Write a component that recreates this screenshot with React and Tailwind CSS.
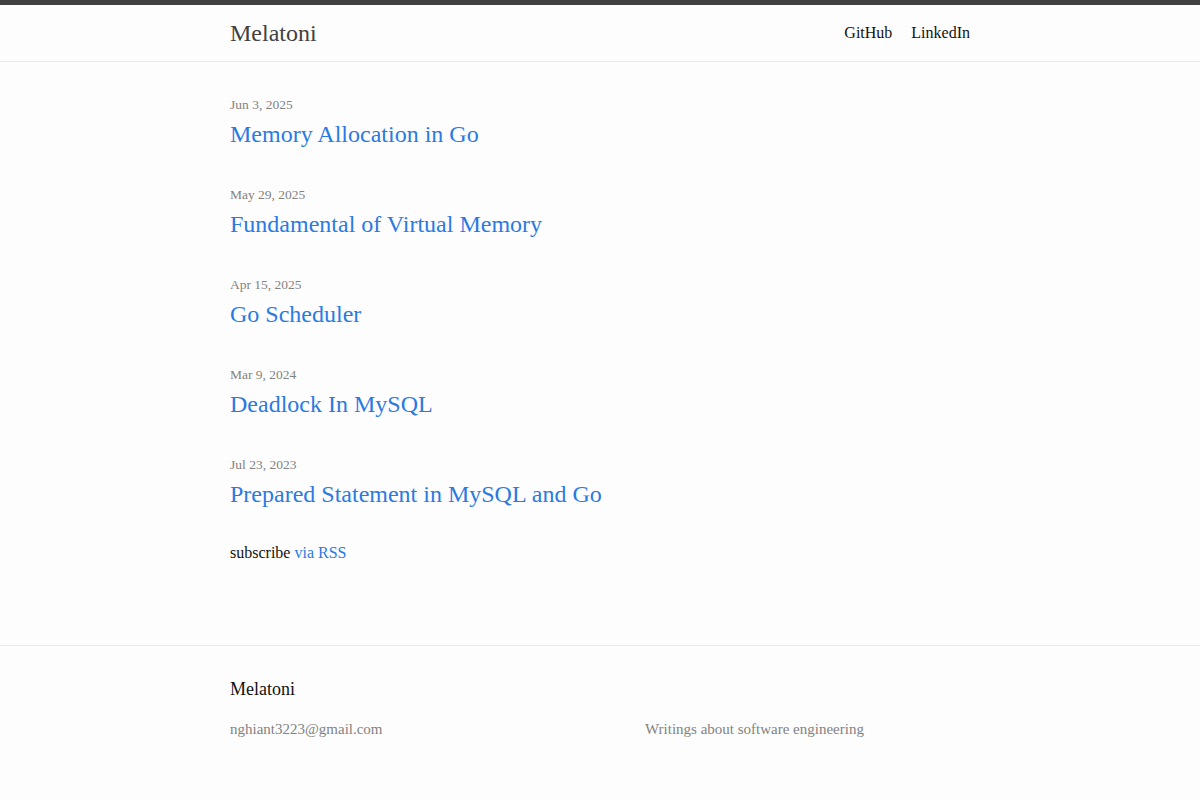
const posts = [
  { date: 'Jun 3, 2025', title: 'Memory Allocation in Go' },
  { date: 'May 29, 2025', title: 'Fundamental of Virtual Memory' },
  { date: 'Apr 15, 2025', title: 'Go Scheduler' },
  { date: 'Mar 9, 2024', title: 'Deadlock In MySQL' },
  { date: 'Jul 23, 2023', title: 'Prepared Statement in MySQL and Go' },
];

function Header() {
  return (
    <header className="border-t-[5px] border-b border-t-[#424242] border-b-[#e8e8e8]">
      <div className="mx-auto flex h-[56px] w-[740px] items-center justify-between">
        <a href="#" className="text-[24px] leading-[56px] text-[#424242]">
          Melatoni
        </a>
        <nav className="flex gap-[19px] text-[16px] text-[#111]">
          <a href="#">GitHub</a>
          <a href="#">LinkedIn</a>
        </nav>
      </div>
    </header>
  );
}

function PostList() {
  return (
    <main className="mx-auto w-[740px] pt-[30px] pb-[80px]">
      <ul className="flex flex-col gap-[30px]">
        {posts.map((post) => (
          <li key={post.title}>
            <div className="pt-px text-[13.5px] leading-[23px] text-[#828282]">{post.date}</div>
            <a href="#" className="block text-[24px] leading-[36px] text-[#2a7ae2]">
              {post.title}
            </a>
          </li>
        ))}
      </ul>
      <p className="mt-[29px] text-[16px] leading-[24px] text-[#111]">
        subscribe <a href="#" className="text-[#2a7ae2]">via RSS</a>
      </p>
    </main>
  );
}

function Footer() {
  return (
    <footer className="border-t border-[#e8e8e8] pt-[30px] pb-[40px]">
      <div className="mx-auto w-[740px]">
        <h2 className="text-[18px] leading-[27px] text-[#111]">Melatoni</h2>
        <div className="mt-[14px] grid grid-cols-[415px_1fr] text-[15px] leading-[24px] text-[#828282]">
          <div>nghiant3223@gmail.com</div>
          <div>Writings about software engineering</div>
        </div>
      </div>
    </footer>
  );
}

export default function App() {
  return (
    <div className="min-h-[800px] bg-[#fdfdfd] font-['Liberation_Serif',serif]">
      <Header />
      <PostList />
      <Footer />
    </div>
  );
}
